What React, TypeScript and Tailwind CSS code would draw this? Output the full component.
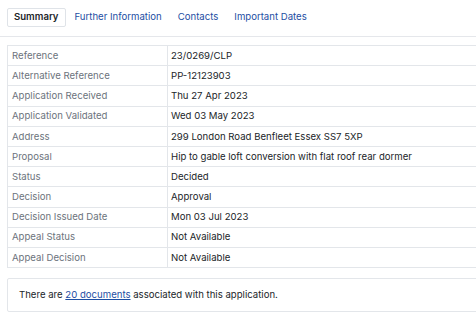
import React from 'react';

const ROWS: [string, string][] = [
  ['Reference', '23/0269/CLP'],
  ['Alternative Reference', 'PP-12123903'],
  ['Application Received', 'Thu 27 Apr 2023'],
  ['Application Validated', 'Wed 03 May 2023'],
  ['Address', '299 London Road Benfleet Essex SS7 5XP'],
  ['Proposal', 'Hip to gable loft conversion with flat roof rear dormer'],
  ['Status', 'Decided'],
  ['Decision', 'Approval'],
  ['Decision Issued Date', 'Mon 03 Jul 2023'],
  ['Appeal Status', 'Not Available'],
  ['Appeal Decision', 'Not Available'],
];

const TABS = ['Summary', 'Further Information', 'Contacts', 'Important Dates'];

export default function App() {
  return (
    <div className="w-[476px] h-[317px] overflow-hidden bg-white font-['Inter',sans-serif] text-[9.6px] text-[#212529]">
      {/* Tabs */}
      <div className="flex items-center gap-[2px] h-[37px] pl-[7px] pt-[8px] pb-[9px] border-b border-[#e5e7eb]">
        {TABS.map((t, i) => (
          <div
            key={t}
            className={
              i === 0
                ? 'h-[19px] px-[6px] flex items-center border border-[#dfe3e8] rounded-[2px] font-semibold text-[#212529]'
                : 'h-[19px] px-[7px] flex items-center text-[#1d4ea3]'
            }
          >
            {t}
          </div>
        ))}
      </div>

      {/* Details table */}
      <div className="pl-[7px] pt-[8px] w-[520px]">
        <table className="w-full border-collapse border border-[#e3e6ea]">
          <tbody>
            {ROWS.map(([k, v]) => (
              <tr key={k} className="h-[20.2px] border-b border-[#e3e6ea]">
                <td className="w-[160px] pl-[4px] border-r border-[#e3e6ea] text-[#6c737c] leading-none">{k}</td>
                <td className="pl-[3px] whitespace-nowrap leading-none">{v}</td>
              </tr>
            ))}
          </tbody>
        </table>
      </div>

      {/* Documents */}
      <div className="pl-[7px] pt-[10px] w-[520px]">
        <div className="h-[34px] flex items-center pl-[11px] border border-[#e3e6ea] rounded-[2px]">
          There are&nbsp;<span className="text-[#1d4ea3] underline">20 documents</span>&nbsp;associated with this application.
        </div>
      </div>
    </div>
  );
}
